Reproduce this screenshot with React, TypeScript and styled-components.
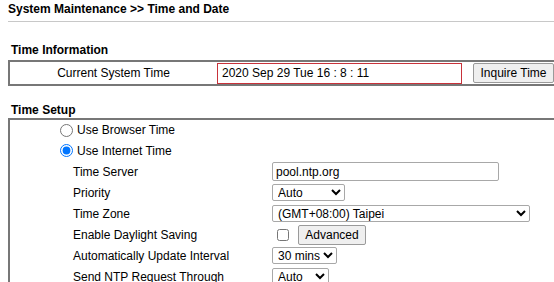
import React from "react";
import styled, { createGlobalStyle } from "styled-components";

const GlobalStyle = createGlobalStyle`
  body {
    margin: 0;
    background: #fff;
    overflow: hidden;
    font-family: "Liberation Sans", Arial, sans-serif;
    font-size: 12px;
    color: #000;
  }
`;

const Page = styled.div`
  width: 600px;
  padding: 0 0 0 8px;
`;

const Title = styled.div`
  font-weight: bold;
  font-size: 12px;
  line-height: 14px;
  padding-top: 2px;
  height: 19px;
  border-bottom: 1px solid #c8c8c8;
`;

const SectionTitle = styled.div<{ $top: number; $drop?: number }>`
  font-weight: bold;
  font-size: 12px;
  line-height: 14px;
  padding-left: 3px;
  margin-top: ${(p) => p.$top}px;
  padding-top: ${(p) => p.$drop ?? 0}px;
  height: ${(p) => 17 - (p.$drop ?? 0)}px;
`;

const InfoBox = styled.div`
  display: flex;
  align-items: center;
  height: 22px;
  border: 2px solid #777;
  border-right: none;
`;

const InfoLabel = styled.div`
  width: 207px;
  text-align: center;
  font-size: 12px;
`;

const TimeField = styled.div`
  width: 239px;
  height: 19px;
  border: 1px solid #c8323a;
  padding-left: 4px;
  display: flex;
  align-items: center;
  font-size: 12px;
`;

const Button = styled.button<{ $w: number }>`
  width: ${(p) => p.$w}px;
  height: 20px;
  padding: 0;
  font-family: "Liberation Sans", Arial, sans-serif;
  font-size: 12px;
  color: #000;
  background: #efefef;
  border: 1px solid #9a9a9a;
  border-radius: 2px;
`;

const InquireButton = styled(Button)`
  margin-left: 11px;
`;

const SetupBox = styled.div`
  border: 2px solid #777;
  border-right: none;
  border-bottom: none;
  display: flex;
  flex-direction: column;
`;

const RadioRow = styled.label<{ $h: number }>`
  display: flex;
  align-items: center;
  height: ${(p) => p.$h}px;
  padding-left: 50px;
  font-size: 12px;
  input {
    margin: 0 4px 0 0;
    width: 13px;
    height: 13px;
  }
`;

const FieldRow = styled.div`
  display: grid;
  grid-template-columns: 199px 1fr;
  align-items: center;
  height: 21px;
  padding-left: 63px;
  font-size: 12px;
`;

const Control = styled.div`
  display: flex;
  align-items: center;
  gap: 9px;
`;

const TextInput = styled.input`
  width: 227px;
  height: 19px;
  box-sizing: border-box;
  border: 1px solid #a8a8a8;
  border-radius: 2px;
  padding: 0 3px;
  font-family: "Liberation Sans", Arial, sans-serif;
  font-size: 12px;
  color: #000;
`;

const Select = styled.select<{ $w: number }>`
  width: ${(p) => p.$w}px;
  height: 17px;
  box-sizing: border-box;
  border: 1px solid #a8a8a8;
  border-radius: 2px;
  padding: 0 0 0 1px;
  background: #fff;
  font-family: "Liberation Sans", Arial, sans-serif;
  font-size: 12px;
  color: #000;
`;

const Check = styled.input`
  margin: 0 0 0 5px;
  width: 12px;
  height: 12px;
`;

export default function App() {
  return (
    <>
      <GlobalStyle />
      <Page>
        <Title>System Maintenance &gt;&gt; Time and Date</Title>

        <SectionTitle $top={21}>Time Information</SectionTitle>
        <InfoBox>
          <InfoLabel>Current System Time</InfoLabel>
          <TimeField>2020 Sep 29 Tue 16 : 8 : 11</TimeField>
          <InquireButton $w={81}>Inquire Time</InquireButton>
        </InfoBox>

        <SectionTitle $top={15} $drop={2}>
          Time Setup
        </SectionTitle>
        <SetupBox>
          <RadioRow $h={20}>
            <input type="radio" name="src" />
            Use Browser Time
          </RadioRow>
          <RadioRow $h={21}>
            <input type="radio" name="src" defaultChecked />
            Use Internet Time
          </RadioRow>
          <FieldRow>
            <span>Time Server</span>
            <Control>
              <TextInput defaultValue="pool.ntp.org" />
            </Control>
          </FieldRow>
          <FieldRow>
            <span>Priority</span>
            <Control>
              <Select $w={73} defaultValue="Auto">
                <option>Auto</option>
              </Select>
            </Control>
          </FieldRow>
          <FieldRow>
            <span>Time Zone</span>
            <Control>
              <Select $w={258} defaultValue="taipei">
                <option value="taipei">(GMT+08:00) Taipei</option>
              </Select>
            </Control>
          </FieldRow>
          <FieldRow>
            <span>Enable Daylight Saving</span>
            <Control>
              <Check type="checkbox" />
              <Button $w={68}>Advanced</Button>
            </Control>
          </FieldRow>
          <FieldRow>
            <span>Automatically Update Interval</span>
            <Control>
              <Select $w={65} defaultValue="30">
                <option value="30">30 mins</option>
              </Select>
            </Control>
          </FieldRow>
          <FieldRow>
            <span>Send NTP Request Through</span>
            <Control>
              <Select $w={57} defaultValue="Auto">
                <option>Auto</option>
              </Select>
            </Control>
          </FieldRow>
        </SetupBox>
      </Page>
    </>
  );
}
